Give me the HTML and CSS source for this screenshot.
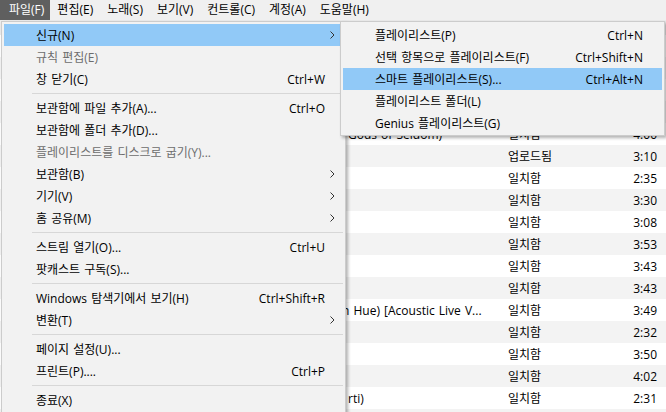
FILE: index.html
```html
<!DOCTYPE html>
<html lang="ko">
<head>
<meta charset="utf-8">
<title>iTunes 파일 메뉴</title>
<link rel="stylesheet" href="styles.css">
</head>
<body>
<div class="app">
  <div class="menubar">
    <span class="top active">파일(F)</span>
    <span class="top">편집(E)</span>
    <span class="top">노래(S)</span>
    <span class="top">보기(V)</span>
    <span class="top">컨트롤(C)</span>
    <span class="top">계정(A)</span>
    <span class="top">도움말(H)</span>
  </div>

  <div class="list">
    <div class="thead"></div>
    <div class="rows">
      <div class="row"><span></span><span class="title"></span><span></span><span class="time"></span></div>
      <div class="row"><span></span><span class="title"></span><span></span><span class="time"></span></div>
      <div class="row"><span></span><span class="title"></span><span></span><span class="time"></span></div>
      <div class="row"><span></span><span class="title"></span><span></span><span class="time"></span></div>
      <div class="row"><span></span><span class="title">Gods of Seldom)</span><span>일치함</span><span class="time">4:00</span></div>
      <div class="row"><span></span><span class="title"></span><span>업로드됨</span><span class="time">3:10</span></div>
      <div class="row"><span></span><span class="title"></span><span>일치함</span><span class="time">2:35</span></div>
      <div class="row"><span></span><span class="title"></span><span>일치함</span><span class="time">3:30</span></div>
      <div class="row"><span></span><span class="title"></span><span>일치함</span><span class="time">3:08</span></div>
      <div class="row"><span></span><span class="title"></span><span>일치함</span><span class="time">3:53</span></div>
      <div class="row"><span></span><span class="title"></span><span>일치함</span><span class="time">3:43</span></div>
      <div class="row"><span></span><span class="title"></span><span>일치함</span><span class="time">3:43</span></div>
      <div class="row"><span></span><span class="title cut">n Hue) [Acoustic Live V...</span><span>일치함</span><span class="time">3:49</span></div>
      <div class="row"><span></span><span class="title"></span><span>일치함</span><span class="time">2:32</span></div>
      <div class="row"><span></span><span class="title"></span><span>일치함</span><span class="time">3:50</span></div>
      <div class="row"><span></span><span class="title"></span><span>일치함</span><span class="time">4:02</span></div>
      <div class="row"><span></span><span class="title">rti)</span><span>일치함</span><span class="time">2:31</span></div>
      <div class="row"><span></span><span class="title"></span><span></span><span class="time"></span></div>
    </div>
  </div>

  <div class="menu main">
    <div class="item hl"><span class="label">신규(N)</span><svg class="arrow" width="5" height="8" viewBox="0 0 5 8"><polyline points="0.5,0.5 4,4 0.5,7.5" fill="none" stroke="#333" stroke-width="1"/></svg></div>
    <div class="item disabled"><span class="label">규칙 편집(E)</span></div>
    <div class="item"><span class="label">창 닫기(C)</span><span class="key">Ctrl+W</span></div>
    <div class="sep"></div>
    <div class="item"><span class="label">보관함에 파일 추가(A)...</span><span class="key">Ctrl+O</span></div>
    <div class="item"><span class="label">보관함에 폴더 추가(D)...</span></div>
    <div class="item disabled"><span class="label">플레이리스트를 디스크로 굽기(Y)...</span></div>
    <div class="item"><span class="label">보관함(B)</span><svg class="arrow" width="5" height="8" viewBox="0 0 5 8"><polyline points="0.5,0.5 4,4 0.5,7.5" fill="none" stroke="#333" stroke-width="1"/></svg></div>
    <div class="item"><span class="label">기기(V)</span><svg class="arrow" width="5" height="8" viewBox="0 0 5 8"><polyline points="0.5,0.5 4,4 0.5,7.5" fill="none" stroke="#333" stroke-width="1"/></svg></div>
    <div class="item"><span class="label">홈 공유(M)</span><svg class="arrow" width="5" height="8" viewBox="0 0 5 8"><polyline points="0.5,0.5 4,4 0.5,7.5" fill="none" stroke="#333" stroke-width="1"/></svg></div>
    <div class="sep"></div>
    <div class="item"><span class="label">스트림 열기(O)...</span><span class="key">Ctrl+U</span></div>
    <div class="item"><span class="label">팟캐스트 구독(S)...</span></div>
    <div class="sep"></div>
    <div class="item"><span class="label">Windows 탐색기에서 보기(H)</span><span class="key">Ctrl+Shift+R</span></div>
    <div class="item"><span class="label">변환(T)</span><svg class="arrow" width="5" height="8" viewBox="0 0 5 8"><polyline points="0.5,0.5 4,4 0.5,7.5" fill="none" stroke="#333" stroke-width="1"/></svg></div>
    <div class="sep"></div>
    <div class="item"><span class="label">페이지 설정(U)...</span></div>
    <div class="item"><span class="label">프린트(P)....</span><span class="key">Ctrl+P</span></div>
    <div class="sep"></div>
    <div class="item"><span class="label">종료(X)</span></div>
  </div>

  <div class="menu sub">
    <div class="item"><span class="label">플레이리스트(P)</span><span class="key">Ctrl+N</span></div>
    <div class="item"><span class="label">선택 항목으로 플레이리스트(F)</span><span class="key">Ctrl+Shift+N</span></div>
    <div class="item hl"><span class="label">스마트 플레이리스트(S)...</span><span class="key">Ctrl+Alt+N</span></div>
    <div class="item"><span class="label">플레이리스트 폴더(L)</span></div>
    <div class="item"><span class="label">Genius 플레이리스트(G)</span></div>
  </div>
</div>
</body>
</html>
```

FILE: styles.css
```css
* { box-sizing: border-box; }

html, body {
  margin: 0;
  padding: 0;
  background: #f0f0f0;
}

body {
  font-family: "Open Sans", "Noto Sans CJK KR", sans-serif;
  font-size: 12px;
  color: #000;
  word-spacing: 1px;
}

.app {
  position: relative;
  width: 666px;
  height: 412px;
  overflow: hidden;
  background: #f0f0f0;
}

/* menu bar */
.menubar {
  display: flex;
  height: 20px;
  background: #f0f0f0;
}

.menubar .top {
  padding: 0 7px;
  line-height: 20px;
  white-space: nowrap;
}

.menubar .top:first-child {
  padding: 0 6px 0 9px;
}

.menubar .top.active {
  background: #5f5f5f;
  color: #fff;
}

/* list behind the menus */
.list {
  background: #fff;
}

.thead {
  height: 15px;
  background: #ececec;
}

.rows .row {
  display: grid;
  grid-template-columns: 348px 160px 1fr 50px;
  height: 22px;
  align-items: center;
  padding-right: 9px;
  background: #fff;
  white-space: nowrap;
}

.rows .row:nth-child(even) {
  background: #f3f3f3;
}

.row .title {
  overflow: hidden;
}

.row .title.cut {
  text-indent: -6px;
  overflow: visible;
}

.row .time {
  text-align: right;
}

/* menus */
.menu {
  position: absolute;
  background: #f2f2f2;
  border: 1px solid #cccccc;
  padding: 2px;
  box-shadow: 2px 2px 3px rgba(0, 0, 0, 0.3);
}

.menu.main {
  left: 1px;
  top: 21px;
  width: 345px;
  height: 400px;
}

.menu.sub {
  left: 340px;
  top: 21px;
  width: 325px;
  padding-bottom: 1px;
}

.item {
  position: relative;
  display: flex;
  align-items: center;
  height: 22px;
  padding: 0 18px 0 32px;
  white-space: nowrap;
}

.menu.sub .item {
  padding-right: 19px;
}

.item .label {
  flex: 1;
}

.item.hl {
  background: #91c9f7;
}

.item.disabled {
  color: #6d6d6d;
}

.item .arrow {
  position: absolute;
  right: 8px;
  top: 7px;
}

.sep {
  height: 1px;
  margin: 3px 0 3px 28px;
  background: #d7d7d7;
}
```
